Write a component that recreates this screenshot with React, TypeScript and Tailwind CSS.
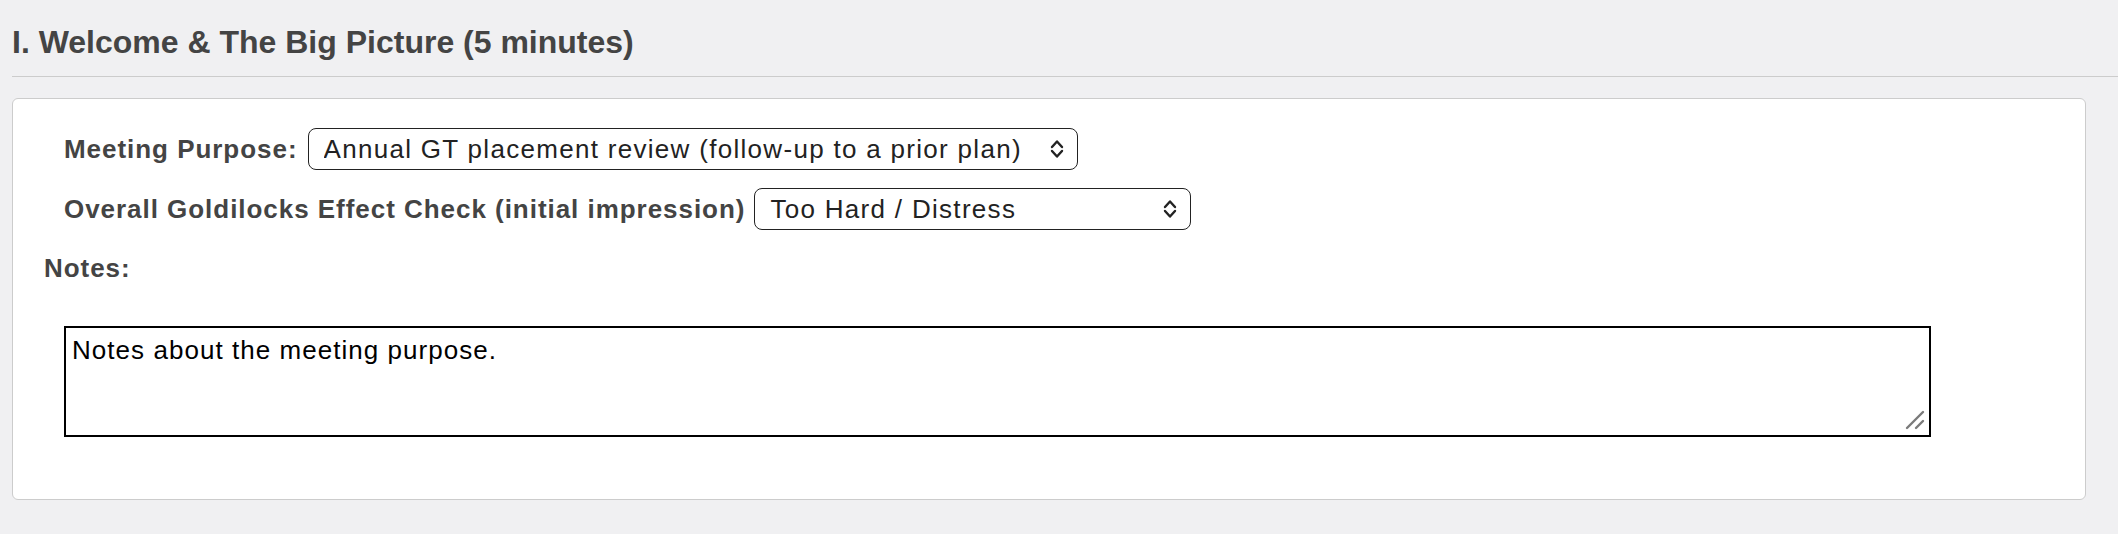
import { useState } from "react";

const Chevrons = () => (
  <svg width="14" height="20" viewBox="0 0 14 20" fill="none" stroke="#222" strokeWidth="2.4" strokeLinecap="round" strokeLinejoin="round">
    <path d="M2 8 L7 2.5 L12 8" />
    <path d="M2 12 L7 17.5 L12 12" />
  </svg>
);

type PickProps = {
  value: string;
  options: string[];
  width: string;
  onChange: (v: string) => void;
};

const Pick = ({ value, options, width, onChange }: PickProps) => (
  <div className={`relative ${width}`}>
    <select
      value={value}
      onChange={(e) => onChange(e.target.value)}
      className="w-full h-[42px] appearance-none bg-white border-[1.5px] border-[#222] rounded-lg pl-[15px] pr-10 text-[26px] tracking-[0.05em] text-[#222] outline-none"
    >
      {options.map((o) => (
        <option key={o}>{o}</option>
      ))}
    </select>
    <span className="pointer-events-none absolute right-[14px] top-1/2 -translate-y-1/2 flex">
      <Chevrons />
    </span>
  </div>
);

export default function App() {
  const [purpose, setPurpose] = useState("Annual GT placement review (follow-up to a prior plan)");
  const [check, setCheck] = useState("Too Hard / Distress");
  const [notes, setNotes] = useState("Notes about the meeting purpose.");

  return (
    <div className="min-h-screen bg-[#f0f0f2] font-['Liberation_Sans',Arial,sans-serif]">
      <div className="pl-3 pt-[23px]">
        <h2 className="text-[32px] leading-[38px] font-bold text-[#444] pb-[15px] border-b-[1.5px] border-[#ccc]">
          I. Welcome &amp; The Big Picture (5 minutes)
        </h2>
      </div>

      <div className="ml-3 mr-8 mt-[21px] border-[1.5px] border-[#ccc] rounded-md bg-white pl-[31px] pt-[29px] pb-[62px]">
        <div className="ml-5 flex items-center gap-[10px]">
          <label className="text-[26px] font-bold tracking-[0.037em] text-[#444]">Meeting Purpose:</label>
          <Pick
            value={purpose}
            onChange={setPurpose}
            width="w-[770px]"
            options={[
              "Initial GT identification meeting",
              "Annual GT placement review (follow-up to a prior plan)",
              "Concern-driven review",
            ]}
          />
        </div>

        <div className="ml-5 mt-[18px] flex items-center gap-[9px]">
          <label className="text-[26px] font-bold tracking-[0.037em] text-[#444]">
            Overall Goldilocks Effect Check (initial impression)
          </label>
          <Pick
            value={check}
            onChange={setCheck}
            width="w-[437px]"
            options={["Too Easy / Boredom", "Just Right", "Too Hard / Distress"]}
          />
        </div>

        <div className="mt-[24px] text-[26px] leading-[28px] font-bold tracking-[0.037em] text-[#444]">Notes:</div>

        <div className="relative ml-5 mt-[44px] w-[1867px]">
          <textarea
            value={notes}
            onChange={(e) => setNotes(e.target.value)}
            className="block w-full h-[111px] resize-none border-2 border-black px-[6px] pt-[3px] text-[26px] tracking-[0.04em] text-black outline-none"
          />
          <svg
            className="pointer-events-none absolute right-[6px] bottom-[7px]"
            width="20"
            height="20"
            viewBox="0 0 20 20"
            stroke="#7a7a7a"
            strokeWidth="2.4"
            strokeLinecap="round"
          >
            <path d="M2 18 L18 2" />
            <path d="M11 18 L18 11" />
          </svg>
        </div>
      </div>
    </div>
  );
}
